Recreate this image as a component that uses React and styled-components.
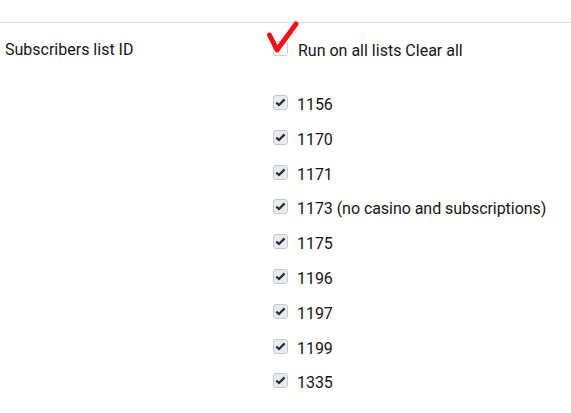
import React from "react";
import styled, { createGlobalStyle } from "styled-components";

const Global = createGlobalStyle`
  html, body { margin: 0; padding: 0; background: #fff; }
  body { font-family: Roboto, "Noto Sans", sans-serif; color: #161616; }
`;

const Page = styled.div`
  padding-top: 22px;
`;

const Divider = styled.div`
  height: 1px;
  background: #d7dde2;
`;

const Row = styled.div`
  display: grid;
  grid-template-columns: 268px 1fr;
  padding: 17px 0 0 5px;
`;

const Label = styled.div`
  font-size: 16px;
  line-height: 20px;
`;

const Values = styled.div`
  display: flex;
  flex-direction: column;
`;

const Head = styled.div`
  position: relative;
  display: flex;
  align-items: center;
  gap: 10px;
  height: 20px;
  margin-bottom: 34.6px;
  font-size: 16px;
`;

const Items = styled.div`
  display: flex;
  flex-direction: column;
  gap: 14.8px;
`;

const Item = styled.label`
  display: flex;
  align-items: center;
  gap: 9px;
  height: 20px;
  font-size: 16px;
  letter-spacing: -0.05px;
`;

const Box = styled.span`
  width: 15px;
  height: 15px;
  box-sizing: border-box;
  border: 1px solid ${(p) => (p.checked ? "#c3cbd2" : "#c9d0d6")};
  border-radius: 3px;
  background: ${(p) => (p.checked ? "#e8ecef" : "#fbfcfc")};
  display: flex;
  align-items: center;
  justify-content: center;
  margin-top: -4px;
  flex: none;
`;

const RedMark = styled.svg`
  position: absolute;
  left: -8px;
  top: -20px;
  pointer-events: none;
`;

const Check = () => (
  <svg width="11" height="9" viewBox="0 0 11 9">
    <path d="M1.3 4.6 L4 7 L9.6 1.4" fill="none" stroke="#27303b" strokeWidth="2.3" />
  </svg>
);

const lists = [
  "1156",
  "1170",
  "1171",
  "1173 (no casino and subscriptions)",
  "1175",
  "1196",
  "1197",
  "1199",
  "1335",
];

export default function App() {
  return (
    <>
      <Global />
      <Page>
        <Divider />
        <Row>
          <Label>Subscribers list ID</Label>
          <Values>
            <Head>
              <Box />
              <span>Run on all lists Clear all</span>
              <RedMark width="40" height="40" viewBox="0 0 40 40">
                <path
                  d="M4.5 15 L12 30 L31 4"
                  fill="none"
                  stroke="#f4121a"
                  strokeWidth="5"
                  strokeLinecap="round"
                  strokeLinejoin="round"
                />
              </RedMark>
            </Head>
            <Items>
              {lists.map((l) => (
                <Item key={l}>
                  <Box checked>
                    <Check />
                  </Box>
                  <span>{l}</span>
                </Item>
              ))}
            </Items>
          </Values>
        </Row>
      </Page>
    </>
  );
}
